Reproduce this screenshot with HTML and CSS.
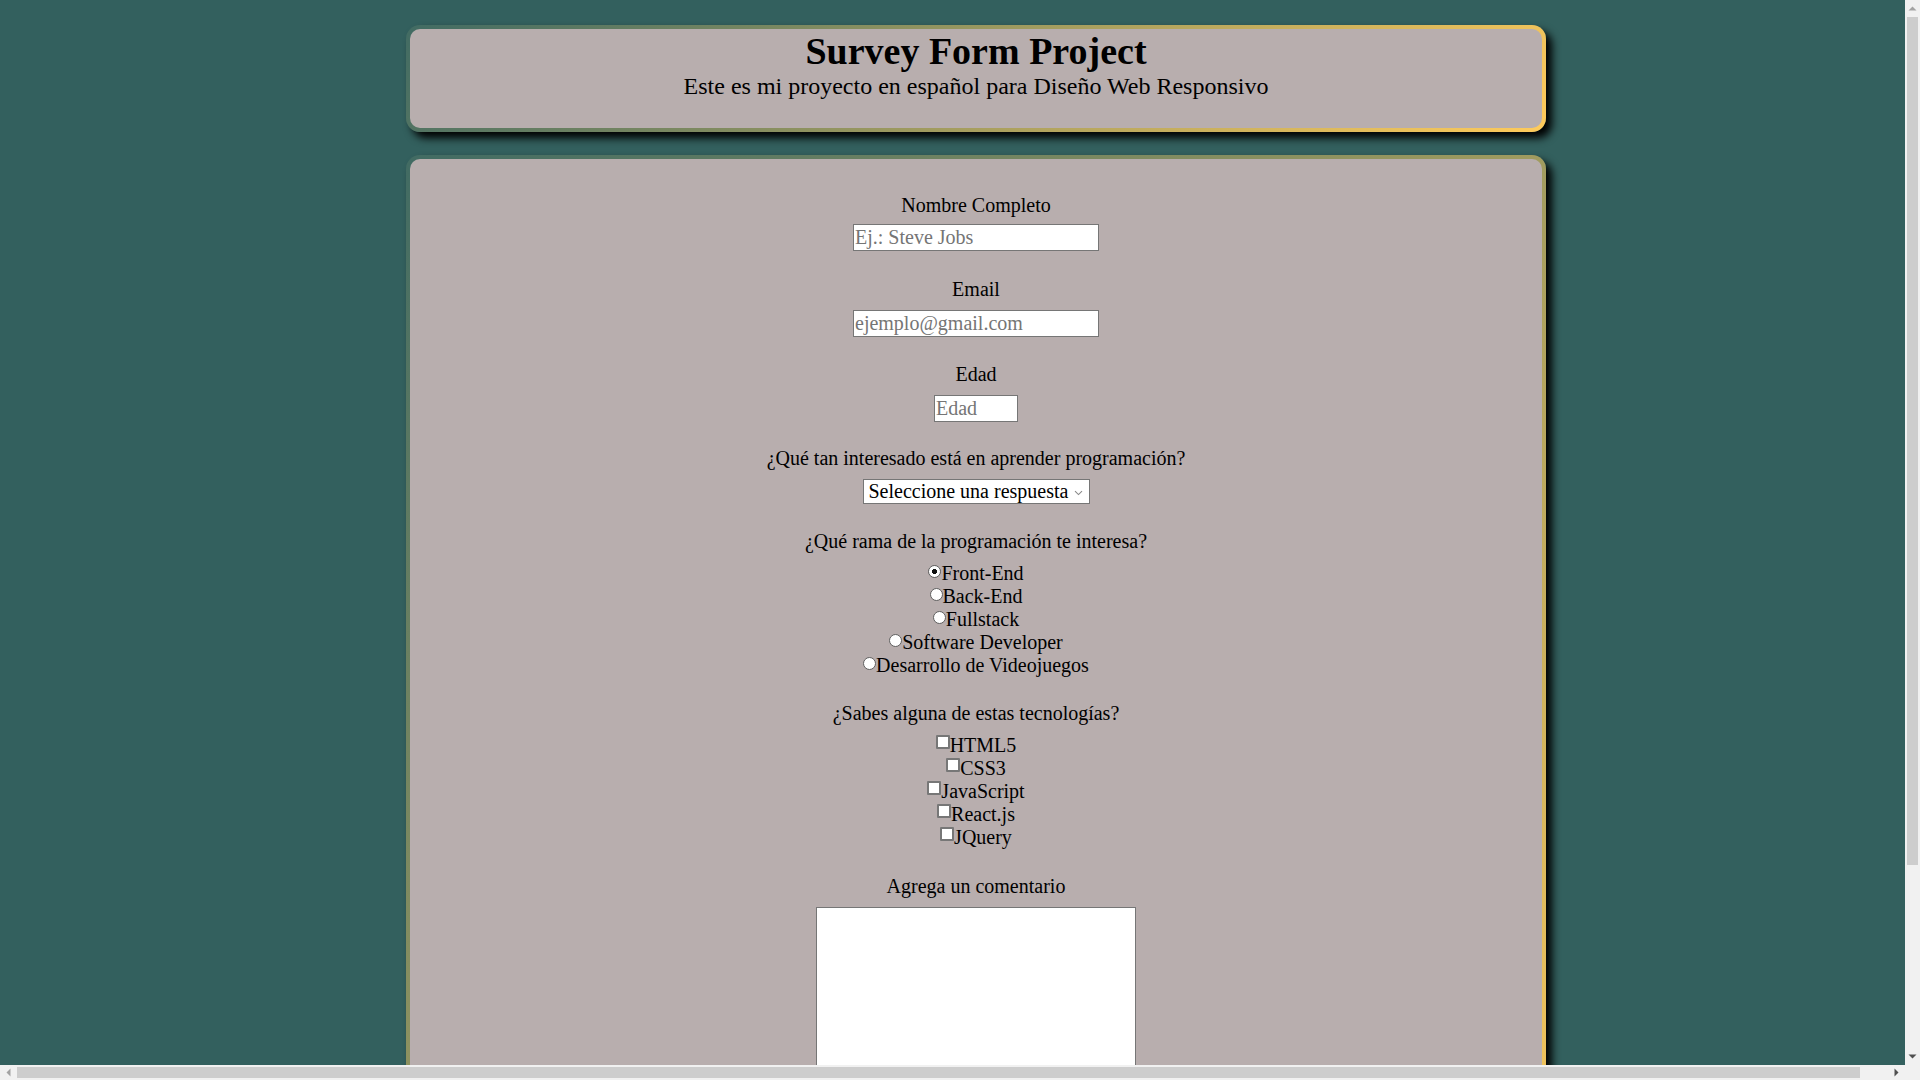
FILE: index.html
```html
<!DOCTYPE html>
<html lang="es">
<head>
<meta charset="utf-8">
<title>Survey Form Project</title>
<link rel="stylesheet" href="styles.css">
</head>
<body>
<header class="top card">
  <h1 class="title">Survey Form Project</h1>
  <p class="subtitle">Este es mi proyecto en español para Diseño Web Responsivo</p>
</header>
<form class="survey card">
  <div class="field field-first">
    <label class="question" for="name">Nombre Completo</label>
    <input class="text-input wide" id="name" type="text" placeholder="Ej.: Steve Jobs">
  </div>
  <div class="field">
    <label class="question" for="email">Email</label>
    <input class="text-input wide" id="email" type="email" placeholder="ejemplo@gmail.com">
  </div>
  <div class="field">
    <label class="question" for="age">Edad</label>
    <input class="text-input short" id="age" type="number" placeholder="Edad">
  </div>
  <div class="field">
    <label class="question" for="interest">¿Qué tan interesado está en aprender programación?</label>
    <span class="select-wrap">
      <select class="select" id="interest">
        <option>Seleccione una respuesta</option>
        <option>Muy interesado</option>
        <option>Algo interesado</option>
        <option>Nada interesado</option>
      </select>
      <svg class="chevron" width="9" height="6" viewBox="0 0 9 6"><path d="M1 1.2 L4.5 4.6 L8 1.2" fill="none" stroke="#8a8a8a" stroke-width="1.1"/></svg>
    </span>
  </div>
  <div class="field">
    <p class="question">¿Qué rama de la programación te interesa?</p>
    <div class="options">
      <label class="option"><input class="radio" type="radio" name="rama" checked>Front-End</label>
      <label class="option"><input class="radio" type="radio" name="rama">Back-End</label>
      <label class="option"><input class="radio" type="radio" name="rama">Fullstack</label>
      <label class="option"><input class="radio" type="radio" name="rama">Software Developer</label>
      <label class="option"><input class="radio" type="radio" name="rama">Desarrollo de Videojuegos</label>
    </div>
  </div>
  <div class="field">
    <p class="question">¿Sabes alguna de estas tecnologías?</p>
    <div class="options">
      <label class="option"><input class="check" type="checkbox">HTML5</label>
      <label class="option"><input class="check" type="checkbox">CSS3</label>
      <label class="option"><input class="check" type="checkbox">JavaScript</label>
      <label class="option"><input class="check" type="checkbox">React.js</label>
      <label class="option"><input class="check" type="checkbox">JQuery</label>
    </div>
  </div>
  <div class="field">
    <label class="question" for="comment">Agrega un comentario</label>
    <textarea class="comment" id="comment"></textarea>
  </div>
</form>

<div class="scrollbar-v" aria-hidden="true">
  <span class="sb-arrow"><svg width="9" height="5" viewBox="0 0 9 5"><path d="M0.5 4.5 L4.5 0.5 L8.5 4.5 Z" fill="#a3a3a3"/></svg></span>
  <span class="sb-thumb-v"></span>
  <span class="sb-fill"></span>
  <span class="sb-arrow"><svg width="9" height="5" viewBox="0 0 9 5"><path d="M0.5 0.5 L4.5 4.5 L8.5 0.5 Z" fill="#505050"/></svg></span>
</div>
<div class="scrollbar-h" aria-hidden="true">
  <span class="sb-arrow"><svg width="5" height="9" viewBox="0 0 5 9"><path d="M4.5 0.5 L0.5 4.5 L4.5 8.5 Z" fill="#a3a3a3"/></svg></span>
  <span class="sb-thumb-h"></span>
  <span class="sb-fill"></span>
  <span class="sb-arrow"><svg width="5" height="9" viewBox="0 0 5 9"><path d="M0.5 0.5 L4.5 4.5 L0.5 8.5 Z" fill="#505050"/></svg></span>
</div>
<div class="scrollbar-corner" aria-hidden="true"></div>
</body>
</html>
```
FILE: styles.css
```css
* {
  margin: 0;
  padding: 0;
  box-sizing: border-box;
}

html {
  background: #33605e;
}

body {
  width: 100vw;
  padding: 25px 0 25px 16px;
  box-sizing: content-box;
  font-family: "Liberation Serif", "Times New Roman", serif;
  font-size: 20px;
  color: #000;
  background: #33605e;
}

.card {
  width: 1140px;
  margin: 0 auto;
  border: 4px solid transparent;
  border-radius: 14px;
  background:
    linear-gradient(#b8aeae, #b8aeae) padding-box,
    linear-gradient(135deg, #416b63 0%, #ffcb5b 100%) border-box;
  box-shadow: 6px 6px 8px #000;
  text-align: center;
}

.top {
  padding-bottom: 28px;
  margin-bottom: 23px;
}

.title {
  font-size: 38px;
  font-weight: bold;
  line-height: normal;
}

.subtitle {
  font-size: 24px;
}

.survey {
  display: flex;
  flex-direction: column;
  align-items: center;
  padding: 34.5px 0 162px;
}

.field {
  display: flex;
  flex-direction: column;
  align-items: center;
  gap: 9px;
  margin-bottom: 25.5px;
}

.field-first {
  gap: 7.5px;
  margin-bottom: 27px;
}

.field:last-child {
  margin-bottom: 0;
}

.question {
  display: block;
}

.text-input {
  font: inherit;
  border: 1px solid #767676;
  padding: 1px 1px;
  background: #fff;
  height: 27px;
}

.text-input::placeholder {
  color: #757575;
}

.text-input::-webkit-inner-spin-button,
.text-input::-webkit-outer-spin-button {
  -webkit-appearance: none;
}

.wide {
  width: 246px;
}

.short {
  width: 84px;
  -moz-appearance: textfield;
}

.select-wrap {
  position: relative;
  display: inline-block;
  line-height: 0;
}

.select {
  -webkit-appearance: none;
  appearance: none;
  font: inherit;
  line-height: 23px;
  height: 25px;
  width: 227px;
  padding: 0 20px 0 5px;
  border: 1px solid #767676;
  border-radius: 0;
  background: #fff;
  color: #000;
}

.chevron {
  position: absolute;
  right: 7px;
  top: 11px;
  pointer-events: none;
}

.options {
  display: flex;
  flex-direction: column;
  align-items: center;
}

.option {
  display: block;
  line-height: 23px;
}

.radio {
  -webkit-appearance: none;
  appearance: none;
  width: 13px;
  height: 13px;
  margin: 0;
  border: 1px solid #5f5f5f;
  border-radius: 50%;
  background: #fff;
  vertical-align: 2px;
}

.radio:checked {
  background: radial-gradient(circle, #111 0 2.3px, #fff 2.8px);
}

.check {
  -webkit-appearance: none;
  appearance: none;
  width: 14px;
  height: 14px;
  margin: 0;
  border: 2px solid #777;
  border-radius: 1px;
  background: #fff;
  vertical-align: 3px;
}

.comment {
  width: 320px;
  height: 200px;
  border: 1px solid #767676;
  background: #fff;
  font: inherit;
  resize: vertical;
}

/* classic browser scrollbars as seen in the capture */
.scrollbar-v {
  position: fixed;
  top: 0;
  right: 0;
  width: 15px;
  height: 1065px;
  display: flex;
  flex-direction: column;
  background: #f1f1f1;
}

.scrollbar-h {
  position: fixed;
  left: 0;
  bottom: 0;
  width: 1905px;
  height: 15px;
  display: flex;
  background: #f1f1f1;
}

.scrollbar-corner {
  position: fixed;
  right: 0;
  bottom: 0;
  width: 15px;
  height: 15px;
  background: #f1f1f1;
}

.sb-arrow {
  flex: 0 0 17px;
  display: flex;
  align-items: center;
  justify-content: center;
}

.sb-thumb-v {
  flex: 0 0 848px;
  margin: 0 2px;
  background: #cdcdcd;
}

.sb-thumb-h {
  flex: 0 0 1843px;
  margin: 2px 0;
  background: #cdcdcd;
}

.sb-fill {
  flex: 1;
}
```
